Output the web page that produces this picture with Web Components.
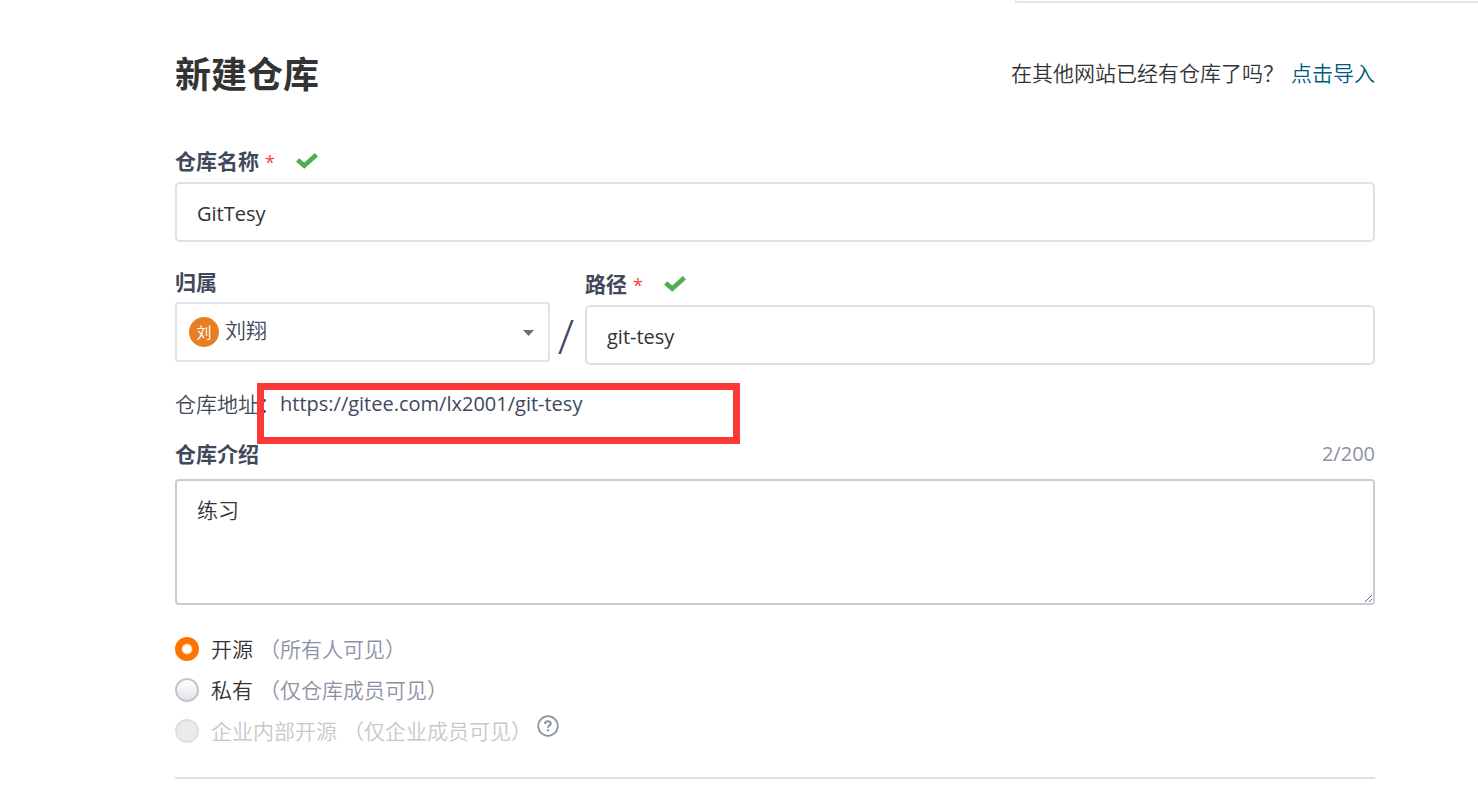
<!DOCTYPE html>
<html lang="zh-CN">
<head>
<meta charset="utf-8">
<title>新建仓库</title>
<style>
  body { margin: 0; background: #fff; color: #40485b; font: 350 21px/30px "Open Sans", "Noto Sans CJK SC", sans-serif; }
</style>
</head>
<body>
<repo-page></repo-page>
<script>
const BASE = `
  * { box-sizing: border-box; }
  input, select, textarea { font: inherit; margin: 0; }
  .latin { font-size: 20px; font-weight: 400; }
`;

function define(name, css, html) {
  const template = document.createElement('template');
  template.innerHTML = `<style>${BASE}${css}</style>`;
  customElements.define(name, class extends HTMLElement {
    connectedCallback() {
      if (this.shadowRoot) return;
      const root = this.attachShadow({ mode: 'open' });
      root.append(template.content.cloneNode(true));
      const body = document.createElement('template');
      body.innerHTML = typeof html === 'function' ? html(this) : html;
      root.append(body.content);
    }
  });
}

define('valid-mark', `
  :host { display: inline-flex; }
  svg { display: block; width: 22px; height: 16px; }
`, `<svg viewBox="0 0 22 16" aria-hidden="true"><path d="M1.600 7 8.200 12.600 20.400 1.800" fill="none" stroke="#4caf50" stroke-width="4.600"/></svg>`);

define('page-header', `
  :host { display: flex; justify-content: space-between; align-items: center; gap: 24px; }
  h1 { margin: 0; font-size: 36px; line-height: 48px; font-weight: 700; color: #333; }
  p { margin: 0 0 4px; color: #333; display: flex; gap: 7px; }
  ::slotted(a) { color: #005980; text-decoration: none; }
`, `<h1><slot name="title"></slot></h1><p><span><slot name="hint"></slot></span><slot name="action"></slot></p>`);

define('text-field', `
  :host { display: block; }
  .head { display: flex; align-items: center; gap: 21px; height: 30px; margin-bottom: 6px; }
  label { font-weight: 700; }
  .star { font-size: 18px; line-height: 18px; font-weight: 400; color: #f44336; margin-left: 6px; }
  input { display: block; width: 100%; height: 60px; padding: 2px 20px 0; border: 2px solid #dde1e8; border-radius: 5px; background: #fff; color: #333; outline: 0; }
`, el => `<div class="head"><label for="field">${el.getAttribute('label')}<span class="star">*</span></label><valid-mark></valid-mark></div>
<input id="field" class="latin" type="text" value="${el.getAttribute('value')}">`);

define('owner-select', `
  :host { display: block; }
  label { display: block; font-weight: 700; margin-bottom: 5px; }
  .box { display: grid; align-items: center; }
  .box > * { grid-area: 1 / 1; }
  select { appearance: none; width: 100%; height: 60px; padding: 0 40px 5px 48px; border: 2px solid #dce3e9; border-radius: 3px; background: #fff; color: #40485b; outline: 0; }
  .avatar { z-index: 1; width: 30px; height: 30px; margin-left: 14px; border-radius: 50%; background: #e67e22; color: #fff; font-size: 15px; font-weight: 400; text-align: center; pointer-events: none; }
  svg { z-index: 1; justify-self: end; margin: 2px 16px 0 0; width: 11px; height: 6px; pointer-events: none; }
`, `<label for="owner">归属</label><div class="box"><select id="owner"><option>刘翔</option></select><span class="avatar">刘</span><svg viewBox="0 0 11 6" aria-hidden="true"><path d="M0 0h11L5.500 6z" fill="#66707c"/></svg></div>`);

define('repo-address', `
  :host { display: flex; position: relative; }
  .mark { position: absolute; left: 82px; top: -6px; width: 483px; height: 61px; border: 7px solid #fc3838; pointer-events: none; }
`, `<span><slot name="name"></slot></span><span class="latin"><slot></slot></span><div class="mark"></div>`);

define('intro-field', `
  :host { display: block; }
  .head { display: flex; justify-content: space-between; margin-bottom: 10px; }
  label { font-weight: 700; }
  .count { color: #8c92a4; }
  textarea { display: block; width: 100%; height: 126px; padding: 14px 20px; border: 2px solid #c9ccd8; border-radius: 4px; background: #fff; color: #333; outline: 0; resize: vertical; }
`, `<div class="head"><label for="intro">仓库介绍</label><span class="count latin">2/200</span></div><textarea id="intro">练习</textarea>`);

define('help-mark', `
  :host { display: block; }
  svg { display: block; width: 22px; height: 22px; }
`, `<svg viewBox="0 0 22 22" fill="none" stroke="#8c92a4" role="img" aria-label="帮助"><circle cx="11" cy="11" r="9.800" stroke-width="1.700"/><path d="M8 8.900C8 5.300 13.800 5.300 13.800 8.500c0 1.900-2.800 2.100-2.800 4.200" stroke-width="2"/><path d="M11 14.300v2" stroke-width="2.200"/></svg>`);

define('visibility-options', `
  :host { display: block; }
  fieldset { margin: 0; padding: 0; border: 0; }
  .row { display: flex; align-items: center; height: 41px; }
  label { display: flex; align-items: center; color: #333; }
  .note { color: #8c92a4; margin-left: 6px; }
  input { appearance: none; flex: none; width: 24px; height: 24px; margin-right: 12px; border: 2px solid #c6c6c6; border-radius: 50%; background: linear-gradient(#fff, #e1e4ec); }
  input:checked { border: 0; background: radial-gradient(circle, #fff 4px, #fe7300 6px); }
  input:disabled { border-color: #e0e0e0; background: #ebebeb; }
  .off label, .off .note { color: #c8c8c8; }
  help-mark { margin: 0 0 10px 5px; }
`, `<fieldset aria-label="可见性">
<div class="row"><label><input type="radio" name="v" checked><span>开源</span><span class="note">（所有人可见）</span></label></div>
<div class="row"><label><input type="radio" name="v"><span>私有</span><span class="note">（仅仓库成员可见）</span></label></div>
<div class="row off"><label><input type="radio" name="v" disabled><span>企业内部开源</span><span class="note">（仅企业成员可见）</span></label><help-mark></help-mark></div>
</fieldset>`);

define('repo-page', `
  :host { display: block; }
  .strip { height: 3px; margin-left: 1015px; border: solid #e5e5e5; border-width: 0 0 2px 2px; }
  main { margin: 48px 103px 0 175px; }
  .name { margin-top: 47px; }
  .pair { display: flex; align-items: flex-start; margin-top: 25px; }
  owner-select { flex: 0 1 375px; }
  .slash { flex: none; width: 35px; padding-right: 3px; margin-top: 50px; text-align: center; font-size: 48px; line-height: 38px; font-weight: 300; }
  .path { flex: 1; margin-top: 2px; }
  repo-address { margin-top: 24px; }
  intro-field { margin-top: 20px; }
  visibility-options { margin-top: 23px; }
  hr { height: 2px; margin: 26px 0 18px; border: 0; background: #dce1e6; }
`, `<div class="strip"></div>
<main>
<page-header><span slot="title">新建仓库</span><span slot="hint">在其他网站已经有仓库了吗？</span><a slot="action" href="#import">点击导入</a></page-header>
<text-field class="name" label="仓库名称" value="GitTesy"></text-field>
<div class="pair"><owner-select></owner-select><span class="slash">/</span><text-field class="path" label="路径" value="git-tesy"></text-field></div>
<repo-address><span slot="name">仓库地址：</span><span>https://gitee.com/lx2001/git-tesy</span></repo-address>
<intro-field></intro-field>
<visibility-options></visibility-options>
<hr>
</main>`);
</script>
</body>
</html>
